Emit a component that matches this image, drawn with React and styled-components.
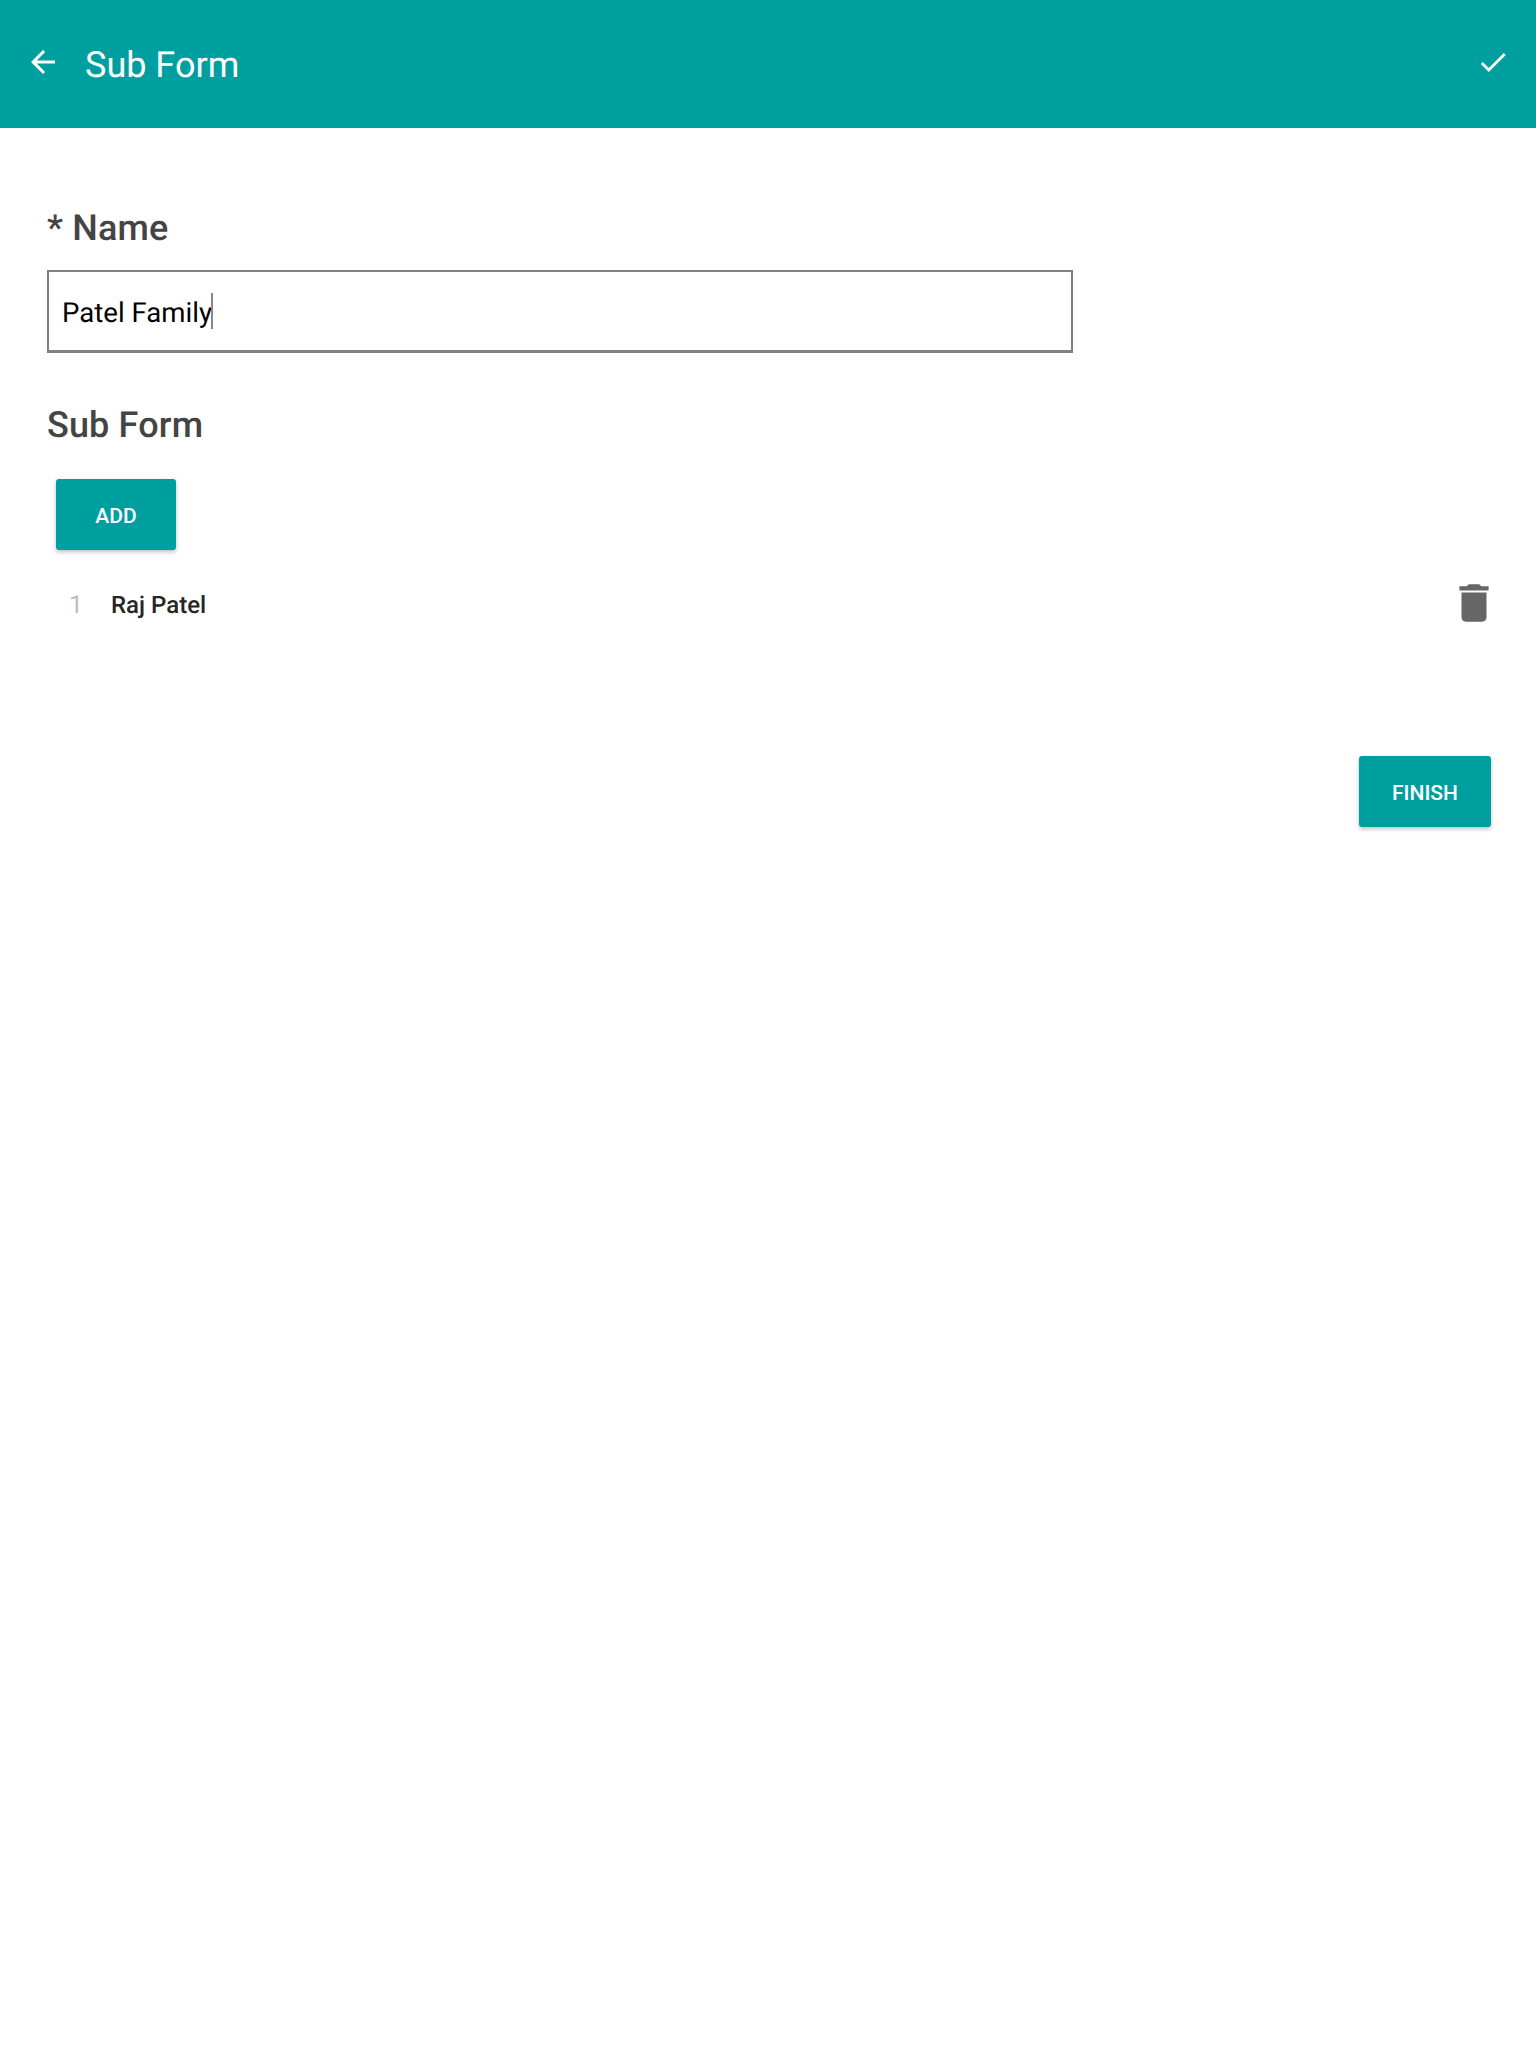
import React from 'react'
import styled, { createGlobalStyle } from 'styled-components';

const GlobalStyle = createGlobalStyle`
    html, body {
        margin: 0;
        padding: 0;
        background: #fff;
        font-family: Roboto, "Liberation Sans", sans-serif;
        text-rendering: geometricPrecision;
    }
`;

const App = () => {
    return (
        <Page>
            <GlobalStyle />
            <Header>
                <IconButton aria-label="Back">
                    <svg width="36" height="36" viewBox="0 0 24 24" fill="#fff">
                        <path d="M20 11H7.83l5.59-5.59L12 4l-8 8 8 8 1.41-1.41L7.83 13H20v-2z" />
                    </svg>
                </IconButton>
                <Title>Sub Form</Title>
                <CheckButton aria-label="Save">
                    <svg width="34" height="34" viewBox="0 0 24 24" fill="#fff">
                        <path d="M9 16.17 4.83 12l-1.42 1.41L9 19 21 7l-1.41-1.41z" />
                    </svg>
                </CheckButton>
            </Header>
            <Content>
                <Label>* Name</Label>
                <InputBox>
                    Patel Family<Caret />
                </InputBox>
                <SectionLabel>Sub Form</SectionLabel>
                <AddButton>ADD</AddButton>
                <Row>
                    <RowIndex>1</RowIndex>
                    <RowName>Raj Patel</RowName>
                    <TrashIcon viewBox="0 0 24 24" fill="#666">
                        <path d="M6 19c0 1.1.9 2 2 2h8c1.1 0 2-.9 2-2V7H6v12zM19 4h-3.5l-1-1h-5l-1 1H5v2h14V4z" />
                    </TrashIcon>
                </Row>
                <Footer>
                    <FinishButton>FINISH</FinishButton>
                </Footer>
            </Content>
        </Page>
    )
}

const Page = styled.div`
    min-height: 2048px;
    background: #fff;
`;
const Header = styled.header`
    height: 128px;
    background: #009f9f;
    display: flex;
    align-items: center;
    padding: 0 26px 0 25px;
    box-sizing: border-box;
`;
const IconButton = styled.div`
    display: flex;
    margin-top: -5px;
`;
const CheckButton = styled(IconButton)`
    margin-left: auto;
`;
const Title = styled.h1`
    margin: 2px 0 0 24px;
    font-size: 36px;
    font-weight: 400;
    color: #fff;
`;
const Content = styled.main`
    padding: 76px 45px 0 47px;
    display: flex;
    flex-direction: column;
    align-items: flex-start;
`;
const Label = styled.div`
    font-size: 36px;
    line-height: 48px;
    font-weight: 500;
    letter-spacing: 0.15px;
    color: #444;
`;
const InputBox = styled.div`
    width: 1026px;
    height: 83px;
    margin-top: 18px;
    box-sizing: border-box;
    border: 2px solid #808080;
    border-bottom-width: 3px;
    padding: 2px 13px 0;
    display: flex;
    align-items: center;
    font-size: 27.6px;
    color: #000;
`;
const Caret = styled.span`
    width: 2px;
    height: 36px;
    margin-left: -1px;
    margin-top: -2px;
    background: #888;
`;
const SectionLabel = styled(Label)`
    margin-top: 48px;
`;
const ActionButton = styled.button`
    height: 71px;
    border: 0;
    border-radius: 3px;
    padding: 2px 0 0;
    background: #009f9f;
    color: #fff;
    font-family: inherit;
    font-size: 21px;
    font-weight: 500;
    box-shadow: 0 2px 4px rgba(0, 0, 0, 0.25);
`;
const AddButton = styled(ActionButton)`
    width: 120px;
    margin: 30px 0 0 9px;
`;
const Row = styled.div`
    align-self: stretch;
    display: flex;
    align-items: center;
    height: 62px;
    margin-top: 23px;
    padding-left: 22px;
`;
const RowIndex = styled.span`
    width: 42px;
    margin-top: 2px;
    font-size: 25px;
    color: #bdbdbd;
`;
const RowName = styled.span`
    flex: 1;
    margin-top: 2px;
    font-size: 24px;
    font-weight: 500;
    color: #262626;
`;
const TrashIcon = styled.svg`
    width: 50px;
    height: 50px;
    margin-top: -2px;
    margin-right: -8px;
`;
const Footer = styled.div`
    align-self: stretch;
    display: flex;
    justify-content: flex-end;
    margin-top: 121px;
`;
const FinishButton = styled(ActionButton)`
    width: 132px;
`;

export default App;
